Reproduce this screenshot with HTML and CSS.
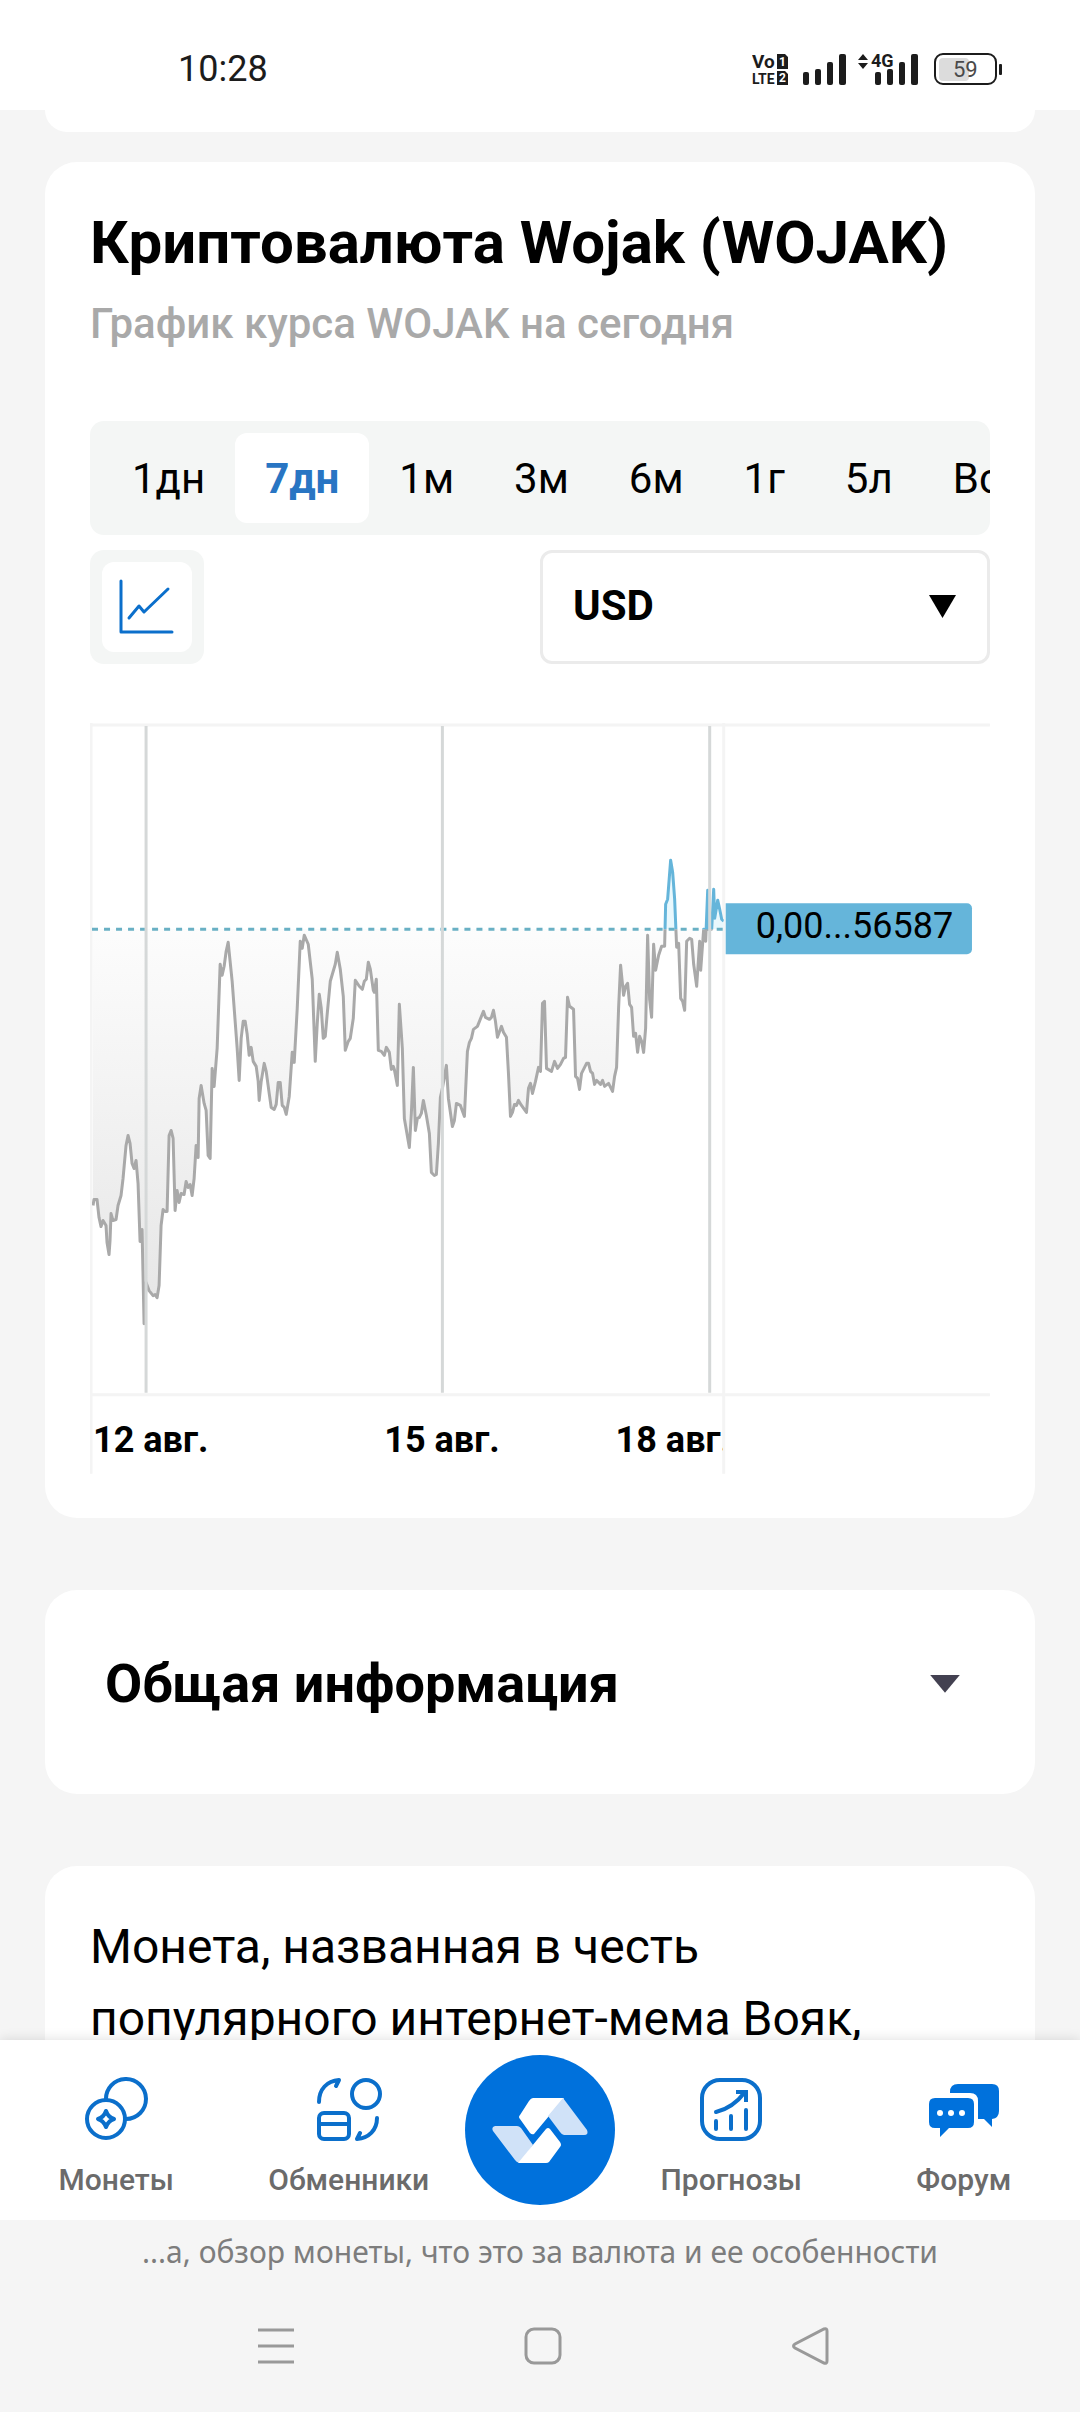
FILE: index.html
```html
<!DOCTYPE html>
<html lang="ru">
  <head>
    <meta charset="UTF-8" />
    <meta name="viewport" content="width=device-width, initial-scale=1" />
    <title>Криптовалюта Wojak (WOJAK)</title>
    <link rel="stylesheet" href="styles.css">
  </head>
  <body>
    <header class="status-bar">
      <span class="clock">10:28</span>
      <svg class="status-icons" viewBox="0 0 252 36" width="252" height="36" aria-hidden="true">
        <g fill="#1c1c1c">
          <text x="0" y="17" font-size="19" font-weight="700">Vo</text>
          <text x="0" y="33" font-size="14" font-weight="700">LTE</text>
          <path d="M25 3h8l3 3v12H25zM25 20h8l3 3v11H25z" />
          <rect x="51" y="21" width="6" height="13" rx="2" />
          <rect x="63" y="18" width="6" height="16" rx="2" />
          <rect x="75" y="11" width="6" height="23" rx="2" />
          <rect x="87" y="3" width="7" height="31" rx="2" />
          <path d="M106 9l5-6 5 6zM106 12l5 6 5-6z" />
          <text x="119" y="16" font-size="18" font-weight="700">4G</text>
          <rect x="123" y="21" width="6" height="13" rx="2" />
          <rect x="135" y="18" width="6" height="16" rx="2" />
          <rect x="147" y="11" width="6" height="23" rx="2" />
          <rect x="159" y="3" width="7" height="31" rx="2" />
          <rect x="247" y="13" width="3" height="11" rx="1" />
        </g>
        <g fill="#fff" font-size="12" font-weight="700">
          <text x="27" y="15">1</text>
          <text x="27" y="31">2</text>
        </g>
        <rect x="187" y="7" width="30" height="23" rx="4" fill="#dcdcdc" />
        <rect x="183" y="3" width="61" height="30" rx="8" fill="none" stroke="#1c1c1c" stroke-width="2" />
        <text x="201" y="26" font-size="22" fill="#4a4a4a">59</text>
      </svg>
    </header>

    <main class="content">
      <div class="card card-prev"></div>

      <section class="card chart-card">
        <h1>Криптовалюта Wojak (WOJAK)</h1>
        <p class="subtitle">График курса WOJAK на сегодня</p>

        <div class="periods">
          <button type="button">1дн</button>
          <button type="button" class="active">7дн</button>
          <button type="button">1м</button>
          <button type="button">3м</button>
          <button type="button">6м</button>
          <button type="button">1г</button>
          <button type="button">5л</button>
          <button type="button">Все</button>
        </div>

        <div class="controls">
          <button type="button" class="chart-type" aria-label="Линейный график">
            <svg viewBox="0 0 90 90" width="90" height="90" fill="none" stroke="#0b6fcb" stroke-width="3" stroke-linecap="round" stroke-linejoin="round">
              <path d="M19 19v51h51" />
              <path d="M27 56l10-12 5 6 24-23" />
            </svg>
          </button>
          <div class="currency">
            <select aria-label="Валюта">
              <option>USD</option>
              <option>RUB</option>
              <option>EUR</option>
            </select>
          </div>
        </div>

        <svg class="chart" viewBox="0 0 899 752">
          <defs>
            <linearGradient id="fall" gradientUnits="userSpaceOnUse" x1="0" y1="206" x2="0" y2="670">
              <stop offset="0" stop-color="#a8a8a8" stop-opacity="0.03" />
              <stop offset="1" stop-color="#a8a8a8" stop-opacity="0.34" />
            </linearGradient>
            <clipPath id="above"><rect x="2" y="0" width="631" height="206" /></clipPath>
            <clipPath id="below"><rect x="2" y="206" width="631" height="464" /></clipPath>
            <clipPath id="axis"><rect x="0" y="670" width="632" height="82" /></clipPath>
          </defs>
          <g class="frame">
            <path d="M0 2h899M0 671h899M1 0v750M633 0v750" />
          </g>
          <path class="area-below" clip-path="url(#below)" />
          <path class="area-above" clip-path="url(#above)" />
          <path class="base" d="M2 206h630" />
          <path class="line line-below" clip-path="url(#below)" />
          <path class="line line-above" clip-path="url(#above)" />
          <path class="grid" d="M56 3v666M352 3v666M619 3v666" />
          <g class="dates" clip-path="url(#axis)">
            <text x="3" y="728">12 авг.</text>
            <text x="294" y="728">15 авг.</text>
            <text x="525" y="728">18 авг.</text>
          </g>
          <path class="price-tag" d="M635 180h241a5 5 0 0 1 5 5v41a5 5 0 0 1-5 5H635z" />
          <text class="price" x="665" y="215">0,00...56587</text>
        </svg>
      </section>

      <section class="card info-card">
        <h2>Общая информация</h2>
        <button type="button" class="toggle" aria-label="Развернуть"></button>
      </section>

      <section class="card about-card">
        <p>Монета, названная в честь популярного интернет-мема Вояк,</p>
      </section>
    </main>

    <nav class="tab-bar">
      <a href="#">
        <svg viewBox="0 0 64 64" width="64" height="64" fill="none" stroke="#0b6fcb" stroke-width="4">
          <circle cx="22" cy="42" r="19" />
          <path d="M22 23a20 20 0 1 1 20 19" />
          <path d="M22 34q2 6 8 8q-6 2-8 8q-2-6-8-8q6-2 8-8z" stroke-linejoin="round" />
        </svg>
        <span>Монеты</span>
      </a>
      <a href="#">
        <svg viewBox="0 0 66 64" width="66" height="64" fill="none" stroke="#0b6fcb" stroke-width="4" stroke-linecap="round" stroke-linejoin="round">
          <circle cx="50" cy="17" r="14" />
          <rect x="3" y="36" width="30" height="26" rx="5" />
          <path d="M3 47h30" stroke-linecap="butt" />
          <path d="M3 25C3 12 11 4 23 3l-3 6" />
          <path d="M61 41c0 12-8 20-20 21l3-6" />
        </svg>
        <span>Обменники</span>
      </a>
      <a href="#" class="home" aria-label="Главная">
        <svg viewBox="0 0 150 150" width="150" height="150">
          <circle cx="75" cy="75" r="75" fill="#0071dc" />
          <path d="M68 43h31L84 61 69 79q-2 1-4-1L55 64q-2-2 0-4l9-14q2-3 4-3z" fill="#fff" />
          <path d="M98 43l24 32q2 5-3 5H99q-2 0-4-3L83 61z" fill="#d0e2f8" />
          <path d="M30 71h22q2 0 4 2l12 17-13 18q-3 0-5-3L28 76q-2-4 2-5z" fill="#d0e2f8" />
          <path d="M53 108l28-34q2-2 4 0l10 13q2 3 0 5L84 107q-1 1-3 1z" fill="#fff" />
        </svg>
      </a>
      <a href="#">
        <svg viewBox="0 0 64 64" width="64" height="64" fill="none" stroke="#0b6fcb" stroke-width="4" stroke-linecap="round">
          <rect x="3" y="3" width="58" height="59" rx="18" />
          <path d="M17 44v8M32 39v13M47 33v19" />
          <path d="M17 35q17-4 29-20" />
          <path d="M37 15h10v10" stroke-linecap="butt" />
        </svg>
        <span>Прогнозы</span>
      </a>
      <a href="#">
        <svg viewBox="0 0 70 64" width="70" height="64" fill="#0071dc">
          <path d="M21 16v-1Q21 7 29 7h34q7 0 7 7v20q0 7-7 8v8l-8-8h-6V24q0-8-8-8z" />
          <path d="M6 21h33q6 0 6 6v18q0 6-6 6H20l-9 9v-9H6q-6 0-6-6V27q0-6 6-6z" />
          <g fill="#fff">
            <circle cx="11" cy="36" r="3" />
            <circle cx="22" cy="36" r="3" />
            <circle cx="33" cy="36" r="3" />
          </g>
        </svg>
        <span>Форум</span>
      </a>
    </nav>

    <p class="page-title">...а, обзор монеты, что это за валюта и ее особенности</p>

    <div class="system-nav">
      <button type="button" aria-label="Меню">
        <svg viewBox="0 0 38 38" width="38" height="38"><path d="M1 3h36M1 19h36M1 35h36" /></svg>
      </button>
      <button type="button" aria-label="Домой">
        <svg viewBox="0 0 38 38" width="38" height="38"><rect x="2" y="2" width="34" height="34" rx="8" /></svg>
      </button>
      <button type="button" aria-label="Назад">
        <svg viewBox="0 0 38 38" width="38" height="38"><path d="M33 2Q36 1 36 4v30q0 3-3 2L4 21q-3-2 0-4z" /></svg>
      </button>
    </div>

    <script src="chart.js"></script>
  </body>
</html>
```

FILE: styles.css
```css
* {
  box-sizing: border-box;
}

body {
  margin: 0;
  height: 100vh;
  display: flex;
  flex-direction: column;
  background: #f5f5f5;
  color: #000;
  font-family: Roboto, "Liberation Sans", sans-serif;
}

h1,
h2,
p {
  margin: 0;
}

button {
  padding: 0;
  border: none;
  background: none;
  color: inherit;
  font: inherit;
  cursor: pointer;
}

svg {
  display: block;
}

.status-bar {
  flex: none;
  display: flex;
  justify-content: space-between;
  align-items: center;
  height: 110px;
  padding: 28px 76px 0 178px;
  background: #fff;
}

.clock {
  font-size: 36px;
  color: #1c1c1c;
}

.content {
  flex: 1;
  min-height: 0;
  overflow: hidden;
  padding: 0 45px;
}

.card {
  background: #fff;
  border-radius: 32px;
}

.card-prev {
  height: 22px;
  border-radius: 0 0 32px 32px;
  margin-bottom: 30px;
}

.chart-card {
  padding: 46px 45px 42px;
  margin-bottom: 72px;
}

h1 {
  font-size: 60px;
  line-height: 70px;
  font-weight: 700;
  white-space: nowrap;
}

.subtitle {
  margin-top: 21px;
  font-size: 42px;
  line-height: 50px;
  font-weight: 500;
  color: #a9a9a9;
}

.periods {
  display: flex;
  margin-top: 72px;
  padding: 12px;
  border-radius: 14px;
  background: #f4f6f5;
  overflow: hidden;
}

.periods button {
  flex: none;
  height: 90px;
  padding: 0 30px;
  border-radius: 12px;
  font-size: 42px;
}

.periods .active {
  background: #fff;
  color: #2875c3;
  font-weight: 700;
}

.controls {
  display: flex;
  justify-content: space-between;
  margin-top: 15px;
}

.chart-type {
  padding: 12px;
  border-radius: 14px;
  background: #f4f6f5;
}

.chart-type svg {
  border-radius: 12px;
  background: #fff;
}

.currency {
  position: relative;
  width: 50%;
}

.currency select {
  appearance: none;
  width: 100%;
  height: 114px;
  padding: 0 30px 4px;
  border: 3px solid #ebebeb;
  border-radius: 12px;
  background: #fff;
  color: #000;
  font-family: inherit;
  font-size: 42px;
  font-weight: 700;
}

.currency::after {
  content: "";
  position: absolute;
  right: 34px;
  top: 45px;
  width: 27px;
  height: 23px;
  background: #000;
  clip-path: polygon(0 0, 100% 0, 50% 100%);
  pointer-events: none;
}

.chart {
  width: 100%;
  height: auto;
  margin-top: 59px;
}

.frame {
  stroke: #f4f4f4;
  stroke-width: 3;
}

.grid {
  stroke: #d5d8d8;
  stroke-width: 3;
}

.base {
  stroke: #69b0c4;
  stroke-width: 3;
  stroke-dasharray: 6 6;
}

.line {
  fill: none;
  stroke-width: 3;
  stroke-linejoin: round;
}

.line-below {
  stroke: #a9a9a9;
}

.line-above {
  stroke: #65b5da;
}

.area-below {
  fill: url(#fall);
}

.area-above {
  fill: #e9f8fd;
}

.dates {
  font-size: 36px;
  font-weight: 700;
}

.price-tag {
  fill: #65b5da;
}

.price {
  font-size: 36px;
}

.info-card {
  display: flex;
  justify-content: space-between;
  align-items: center;
  height: 204px;
  padding: 0 75px 16px 60px;
  margin-bottom: 72px;
}

h2 {
  font-size: 54px;
  line-height: 64px;
  font-weight: 700;
}

.toggle {
  width: 30px;
  height: 18px;
  background: #434151;
  clip-path: polygon(0 0, 100% 0, 50% 100%);
}

.about-card {
  padding: 45px 45px 200px;
  font-size: 48px;
  line-height: 72px;
}

.tab-bar {
  position: relative;
  flex: none;
  display: flex;
  height: 180px;
  background: #fff;
  box-shadow: 0 0 12px rgba(0, 0, 0, 0.14);
  clip-path: inset(-20px 0 0 0);
}

.tab-bar a {
  flex: 1;
  display: flex;
  flex-direction: column;
  align-items: center;
  padding-top: 37px;
  color: #6b6b6b;
  font-size: 30px;
  line-height: 36px;
  font-weight: 500;
  text-decoration: none;
}

.tab-bar span {
  margin-top: 21px;
}

.tab-bar .home {
  flex: none;
  padding-top: 15px;
}

.page-title {
  flex: none;
  padding-top: 8px;
  font-family: "Noto Sans", sans-serif;
  font-size: 30px;
  line-height: 48px;
  text-align: center;
  white-space: nowrap;
  color: #7d7d7d;
}

.system-nav {
  flex: none;
  display: grid;
  grid-template-columns: repeat(3, 1fr);
  align-items: center;
  justify-items: center;
  height: 136px;
  padding: 4px 136px 0 142px;
}

.system-nav svg {
  fill: none;
  stroke: #999;
  stroke-width: 3;
}
```

FILE: chart.js
```js
// [time, price offset], offset grows downwards
const points = [
  [40,1015],[43,1003],[52,1003],[57,1040],[64,1058],[70,1045],[77,1055],[80,1090],[87,1114],[90,1085],
  [94,1032],[100,1045],[107,1043],[113,1015],[122,995],[130,960],[137,895],[143,875],[150,890],[155,930],
  [162,940],[168,925],[175,970],[181,1087],[186,1063],[193,1253],[199,1170],[206,1185],[218,1196],[225,1193],
  [231,1199],[236,1175],[242,1055],[248,1024],[255,1027],[262,1027],[266,875],[272,864],[279,880],[286,1025],
  [292,985],[297,1010],[304,990],[311,992],[317,967],[323,978],[330,973],[335,995],[341,960],[347,895],
  [353,919],[358,800],[364,773],[371,810],[377,825],[383,915],[390,921],[395,740],[403,776],[410,700],
  [421,530],[427,552],[433,535],[438,505],[445,487],[457,565],[470,700],[476,763],[482,680],[488,645],
  [494,645],[501,672],[507,713],[513,698],[519,725],[528,735],[534,765],[538,805],[544,765],[551,730],
  [559,745],[568,790],[574,818],[581,823],[587,812],[593,768],[599,768],[605,815],[611,818],[618,833],
  [626,795],[637,707],[642,727],[652,620],[661,485],[667,498],[673,473],[684,490],[697,560],[705,726],
  [711,650],[716,591],[722,620],[729,680],[736,675],[742,630],[750,565],[764,530],[771,507],[780,540],
  [788,595],[796,704],[803,685],[810,680],[818,640],[826,563],[836,575],[845,581],[853,565],[858,560],
  [864,526],[870,540],[880,583],[883,587],[889,560],[895,703],[903,705],[912,713],[919,698],[926,707],
  [932,741],[940,735],[943,742],[950,773],[956,612],[965,700],[973,840],[988,899],[994,830],[999,738],
  [1006,865],[1011,840],[1018,838],[1024,830],[1030,805],[1038,835],[1047,870],[1053,948],[1061,955],
  [1067,952],[1073,890],[1079,798],[1086,780],[1098,733],[1104,800],[1115,857],[1122,845],[1128,810],
  [1140,815],[1153,836],[1160,705],[1166,687],[1172,680],[1178,662],[1192,655],[1208,625],[1215,637],
  [1227,641],[1233,637],[1240,624],[1246,645],[1252,677],[1264,655],[1270,668],[1277,677],[1283,750],
  [1289,836],[1296,828],[1301,812],[1308,815],[1313,804],[1322,815],[1338,828],[1343,780],[1351,770],
  [1356,790],[1364,765],[1375,738],[1380,745],[1387,609],[1393,606],[1399,740],[1412,745],[1423,726],
  [1430,740],[1440,732],[1449,720],[1456,718],[1461,597],[1468,615],[1480,622],[1486,755],[1492,760],
  [1498,782],[1504,750],[1510,742],[1517,729],[1523,730],[1529,745],[1535,750],[1541,772],[1549,763],
  [1560,772],[1565,763],[1571,775],[1585,770],[1597,786],[1603,755],[1609,738],[1615,620],[1621,533],
  [1628,592],[1634,575],[1640,568],[1646,612],[1652,618],[1658,675],[1665,670],[1670,708],[1676,675],
  [1683,685],[1689,708],[1695,660],[1701,473],[1707,600],[1713,638],[1720,490],[1726,543],[1733,513],
  [1744,495],[1751,494],[1756,410],[1762,400],[1769,322],[1776,345],[1782,400],[1788,497],[1793,488],
  [1800,598],[1805,605],[1812,623],[1818,485],[1826,478],[1832,480],[1840,530],[1849,574],[1856,485],
  [1861,543],[1868,460],[1874,485],[1880,382],[1884,460],[1892,460],[1898,380],[1903,438],[1910,402],
  [1918,420],[1924,440],[1928,444],
];

const BASE = 206;
const coords = points.map(([t, v]) => [
  Math.round(t / 3 - 10),
  Math.round(v / 2.01 - 23),
]);

const line = "M" + coords.map((p) => p.join(" ")).join("L");
const area = line + `L${coords[coords.length - 1][0]} ${BASE}L${coords[0][0]} ${BASE}Z`;

document.querySelectorAll(".line").forEach((el) => el.setAttribute("d", line));
document.querySelector(".area-below").setAttribute("d", area);
document.querySelector(".area-above").setAttribute("d", area);
```
